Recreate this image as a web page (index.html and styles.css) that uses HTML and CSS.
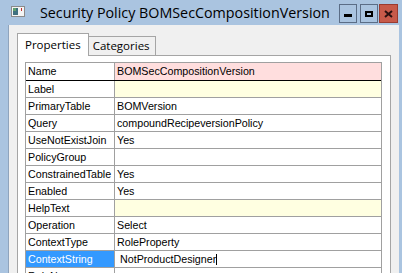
FILE: index.html
```html
<!DOCTYPE html>
<html lang="en">
<head>
  <meta charset="UTF-8" />
  <title>Security Policy BOMSecCompositionVersion</title>
  <link rel="stylesheet" href="styles.css">
</head>
<body>
  <div class="window">
    <div class="titlebar">
      <svg class="app-icon" width="14" height="11" viewBox="0 0 14 11">
        <rect x="0.5" y="0.5" width="13" height="10" fill="#f4f4f4" stroke="#8a8a8a" />
        <rect x="2" y="2" width="5" height="7" fill="#3f7080" />
        <rect x="2" y="2" width="3" height="3" fill="#5fa070" />
        <rect x="10" y="2" width="1" height="3" fill="#c03030" />
      </svg>
      <span class="title">Security Policy BOMSecCompositionVersion</span>
      <div class="controls">
        <div class="ctl min"><span></span></div>
        <div class="ctl max"><span></span></div>
        <div class="ctl close">
          <svg width="9" height="8" viewBox="0 0 9 8">
            <path d="M1 1 L8 7 M8 1 L1 7" stroke="#2a1010" stroke-width="2" />
          </svg>
        </div>
      </div>
    </div>

    <div class="client">
      <div class="tabs">
        <div class="tab active">Properties</div>
        <div class="tab">Categories</div>
      </div>
      <div class="panel">
        <div class="grid">
          <div class="row first"><div class="key">Name</div><div class="val pink">BOMSecCompositionVersion</div></div>
          <div class="row"><div class="key">Label</div><div class="val yellow"></div></div>
          <div class="row"><div class="key">PrimaryTable</div><div class="val">BOMVersion</div></div>
          <div class="row"><div class="key">Query</div><div class="val">compoundRecipeversionPolicy</div></div>
          <div class="row"><div class="key">UseNotExistJoin</div><div class="val">Yes</div></div>
          <div class="row"><div class="key">PolicyGroup</div><div class="val"></div></div>
          <div class="row"><div class="key">ConstrainedTable</div><div class="val">Yes</div></div>
          <div class="row"><div class="key">Enabled</div><div class="val">Yes</div></div>
          <div class="row"><div class="key">HelpText</div><div class="val yellow"></div></div>
          <div class="row"><div class="key">Operation</div><div class="val">Select</div></div>
          <div class="row"><div class="key">ContextType</div><div class="val">RoleProperty</div></div>
          <div class="row"><div class="key selected">ContextString</div><div class="val editing">NotProductDesigner<span class="caret"></span></div></div>
          <div class="row"><div class="key">RoleName</div><div class="val"></div></div>
        </div>
      </div>
    </div>
  </div>
</body>
</html>
```

FILE: styles.css
```css
body {
  margin: 0;
  width: 402px;
  height: 273px;
  overflow: hidden;
  font-family: "Liberation Sans", Arial, sans-serif;
}
.window {
  background: #aac4e0;
  height: 273px;
  padding: 0 3px 0 8px;
  box-sizing: border-box;
  display: flex;
  flex-direction: column;
}
.titlebar {
  height: 25px;
  display: flex;
  align-items: center;
  flex-shrink: 0;
  margin-left: -8px;
  margin-right: -3px;
  padding-left: 11px;
  box-sizing: border-box;
}
.app-icon {
  margin-top: -2px;
  flex-shrink: 0;
}
.title {
  margin-left: 15px;
  font-family: "Open Sans", "Noto Sans", sans-serif;
  font-size: 14.3px;
  color: #000;
  white-space: nowrap;
  margin-top: -1px;
}
.controls {
  margin-left: auto;
  margin-right: 4px;
  display: flex;
  align-self: flex-start;
  margin-top: 4px;
}
.ctl {
  width: 18px;
  height: 19px;
  box-sizing: border-box;
  border: 1px solid #5b6d86;
  display: flex;
  align-items: center;
  justify-content: center;
}
.ctl.min { margin-right: 3px; }
.ctl.max { margin-right: 1px; }
.ctl.min span {
  width: 8px;
  height: 3px;
  background: #000;
  margin-top: 4px;
}
.ctl.max span {
  width: 8px;
  height: 6px;
  box-sizing: border-box;
  border: 2px solid #000;
}
.ctl.close {
  width: 19px;
  background: #c75a4a;
  border-color: #9a3b30;
}
.client {
  flex: 1;
  min-height: 0;
  background: #f0f0f0;
  border-left: 1px solid #8fa4bd;
  padding: 8px 8px 0 8px;
  display: flex;
  flex-direction: column;
}
.tabs {
  display: flex;
  align-items: flex-end;
  height: 22px;
  flex-shrink: 0;
  font-family: "Open Sans", "Noto Sans", sans-serif;
  font-size: 11.5px;
}
.tab {
  height: 19px;
  box-sizing: border-box;
  border: 1px solid #a5a5a5;
  border-bottom: none;
  border-left: none;
  padding: 0 5px 0 4px;
  line-height: 18px;
  background: #f0f0f0;
  color: #000;
}
.tab.active {
  height: 23px;
  border-left: 1px solid #a5a5a5;
  background: #fff;
  padding: 2px 7px 0 7px;
  position: relative;
  z-index: 1;
  margin-bottom: -1px;
}
.panel {
  flex: 1;
  min-height: 0;
  overflow: hidden;
  background: #fff;
  border: 1px solid #a5a5a5;
  border-bottom: none;
  padding: 6px 8px 0 7px;
}
.grid {
  border: 1px solid #a0a0a0;
  border-bottom: none;
  font-size: 10.7px;
  color: #000;
}
.row {
  display: grid;
  grid-template-columns: 89px 1fr;
  height: 17px;
  box-sizing: border-box;
  border-bottom: 1px solid #a0a0a0;
}
.row.first {
  height: 18px;
  border-bottom-color: #000;
}
.key, .val {
  padding-left: 2px;
  line-height: 16px;
  white-space: nowrap;
  overflow: hidden;
}
.row.first .key, .row.first .val {
  line-height: 17px;
}
.key {
  border-right: 1px solid #a0a0a0;
}
.key.selected {
  background: #3399ff;
  color: #fff;
}
.val.pink { background: #ffdede; }
.val.yellow { background: #ffffe1; }
.val.editing {
  padding-left: 5px;
}
.caret {
  display: inline-block;
  width: 1px;
  height: 11px;
  background: #000;
  vertical-align: -2px;
}
```
